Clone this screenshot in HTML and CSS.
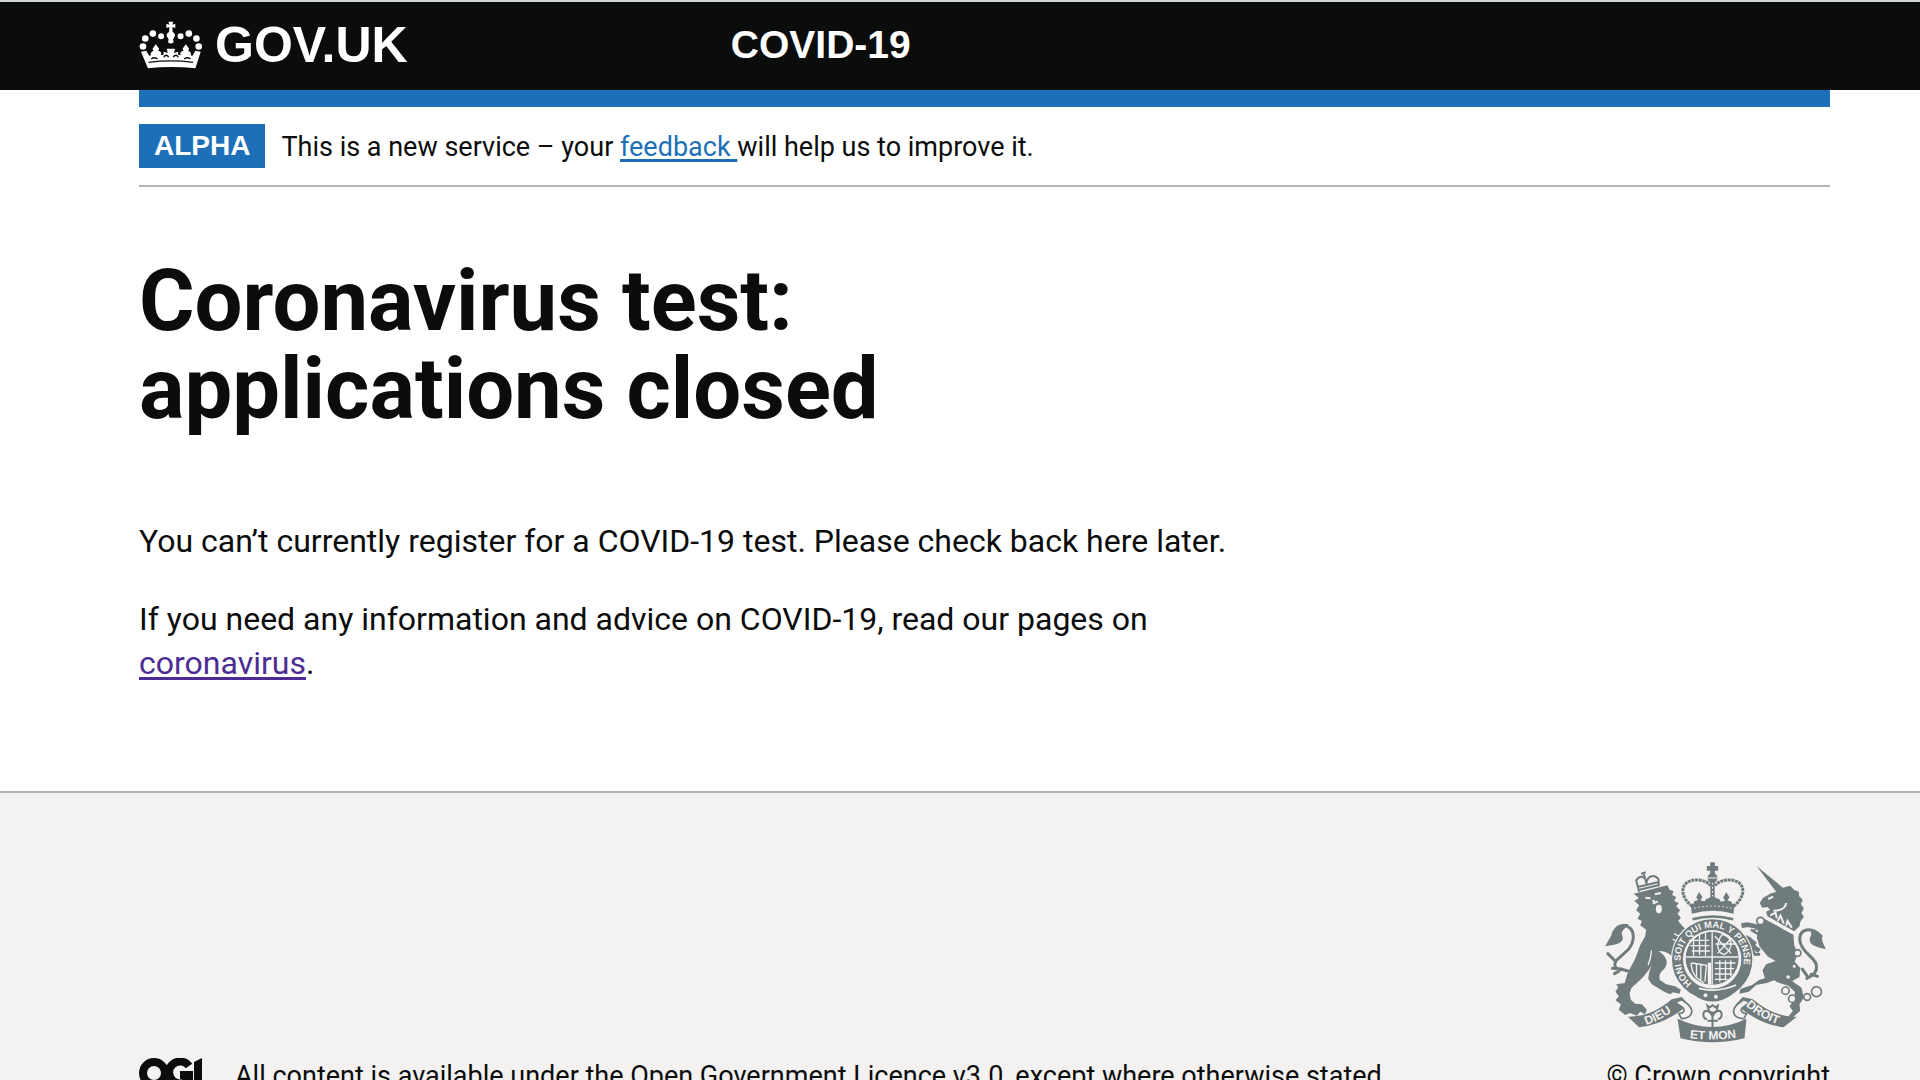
FILE: index.html
```html
<!DOCTYPE html>
<html lang="en">
<head>
    <meta charset="UTF-8">
    <meta name="viewport" content="width=device-width, initial-scale=1.0">
    <title>Coronavirus test: applications closed - GOV.UK</title>
    <link rel="stylesheet" href="styles.css">
</head>
<body>
    <header class="header">
        <div class="container header-content">
            <div class="header-logo">
                <a href="#" class="logo">
                    <svg class="logo-crown" viewBox="55 58 194 148" aria-hidden="true">
                        <g fill="currentColor">
                            <circle cx="67" cy="135" r="10"/>
                            <circle cx="74" cy="111" r="10"/>
                            <circle cx="97" cy="96" r="10"/>
                            <circle cx="122" cy="104" r="9"/>
                            <circle cx="181" cy="104" r="9"/>
                            <circle cx="206" cy="96" r="10"/>
                            <circle cx="229" cy="111" r="10"/>
                            <circle cx="236" cy="135" r="10"/>
                            <path d="M144 60h15l-3 9 9-3v13l-9-3 1 15c7 3 9 10 5 16l-4 7 2 8c-5 5-12 5-17 0l2-8-4-7c-4-6-2-13 5-16l1-15-9 3V66l9 3z"/>
                            <path d="M61 151l16-3 9 15 5-1c-2-8 1-11 8-13l-3-7 10-14 10 14-3 7c8 0 12 6 8 12l9-1-1-9 13 4-3-13h25l-3 13 13-4-1 9 9 1c-4-6 0-12 8-12l-3-7 10-14 10 14-3 7c7 2 10 5 8 13l5 1 9-15 16 3-16 50c-50-5-96-5-144 0z"/>
                        </g>
                        <g fill="none" stroke="#0b0c0c" stroke-width="4">
                            <path d="M84 183c46-6 90-6 135 0M92 173c6-5 13-5 19 0M130 168c3-8 10-9 15-1M159 167c5-8 12-7 15 1M192 173c6-5 13-5 19 0"/>
                        </g>
                    </svg>
                    <span>GOV.UK</span>
                </a>
            </div>
            <a href="#" class="service-name">COVID-19</a>
        </div>
    </header>

    <div class="container">
        <div class="header-bar"></div>
        <div class="phase-banner">
            <strong class="tag">ALPHA</strong>
            <span>This is a new service – your <a href="#" class="link">feedback </a>will help us to improve it.</span>
        </div>

        <main class="main">
            <h1>Coronavirus test: applications closed</h1>
            <p>You can’t currently register for a COVID-19 test. Please check back here later.</p>
            <p>If you need any information and advice on COVID-19, read our pages on <a href="#" class="link link-visited">coronavirus</a>.</p>
        </main>
    </div>

    <footer class="footer">
        <div class="container footer-content">
            <div class="licence">
                <svg class="licence-logo" viewBox="0 0 64 30" aria-hidden="true">
                    <g fill="none" stroke="currentColor" stroke-width="8">
                        <circle cx="15" cy="15" r="11"/>
                        <path d="M50 8A11 11 0 1 0 50 21V17H41"/>
                    </g>
                    <path d="M55 4l8-4v22h9v8H55z" fill="currentColor"/>
                </svg>
                <span>All content is available under the <a href="#" class="licence-link">Open Government Licence v3.0</a>, except where otherwise stated</span>
            </div>
            <a href="#" class="copyright">
                <svg class="crest" viewBox="42 32 668 546" aria-hidden="true">
                    <defs>
                        <path id="garter" d="M305 400A95 95 0 1 1 427 400"/>
                        <path id="ribbonLeft" d="M168 524Q218 508 264 470"/>
                        <path id="ribbonMid" d="M286 562Q366 574 452 560"/>
                        <path id="ribbonRight" d="M466 466Q518 512 580 526"/>
                    </defs>

                    <!-- lion -->
                    <path fill="currentColor" d="M148 126L232 105 238 118 250 122 246 134 258 140 252 152 266 158 258 168 270 180 262 190 272 202 264 212 276 226 290 240 262 272 258 330 262 345C255 325 240 302 205 302C228 318 238 336 222 356Q205 368 208 388L228 402 255 408 272 418 268 430 248 426 240 432 222 424 205 414 185 402 174 385 178 362 185 345Q165 378 140 398L124 412 118 430 122 448 135 460 155 462 170 478 165 492 150 484 140 496 120 488 105 494 86 478 92 462 76 450 86 438 76 424 84 410 78 402 104 398C112 360 130 340 138 318L150 285 165 258 168 238 150 225 155 212 142 205 150 190 138 180 147 165 133 152 146 143 131 130z"/>
                    <g fill="none" stroke="currentColor" stroke-width="9" stroke-linecap="round">
                        <path d="M113 362l-18-5c-20 0-28-12-14-29l34-31c18-22 19-51 4-64-12-11-30-10-42 4"/>
                        <path d="M96 357l-29-3M87 362l-14 8M75 332l-22-22"/>
                    </g>
                    <path fill="currentColor" d="M115 222c-26-5-48 12-52 34l-18 32c26-4 49-7 53-22 2-13-10-14 2-28z"/>
                    <path fill="none" stroke="currentColor" stroke-width="6" d="M147 124l-9-34c11-17 29-12 31 6 4-20 23-26 36-10l1 22M143 110l60-14M148 118l56-13M170 104l-10-36M153 70l14-4"/>
                    <path fill="none" stroke="#f3f2f1" stroke-width="6" d="M166 142l15 2M194 132l18-4M188 160l15-7"/>
                    <ellipse cx="206" cy="176" rx="9" ry="13" fill="#f3f2f1"/>
                    <circle cx="190" cy="152" r="4" fill="#f3f2f1"/>
                    <path fill="none" stroke="#f3f2f1" stroke-width="4" d="M252 250l24 13M247 266l23 13M184 300q-2 26-10 44"/>

                    <!-- unicorn -->
                    <path fill="currentColor" d="M499 47L578 112 600 106 612 119 626 124 627 138 638 148 632 161 641 174 634 188 641 200 631 213 628 228 612 243 532 198 528 184 540 178 532 170 516 172 509 158 518 143 540 130 558 124z"/>
                    <path fill="currentColor" d="M522 205L610 253 612 285 622 308 614 335 630 352 628 380 606 392 634 412 641 442 628 462 630 482 604 504 596 496 608 482 598 468 612 450 614 424 594 406 562 396 552 390 530 398 498 404 476 424 448 430 450 416 486 404 508 388 524 384 517 360 528 342 556 332 532 318 508 288 500 262 506 228z"/>
                    <path fill="none" stroke="currentColor" stroke-width="14" stroke-linejoin="round" d="M516 232l-42-9-20 3M508 302l-14-9-18-29M496 282l-30-22"/>
                    <path fill="none" stroke="currentColor" stroke-width="8" d="M482 238l28 16M474 276l20 36 16 0"/>
                    <path fill="none" stroke="#f3f2f1" stroke-width="6" d="M522 198l84 50M540 195l16-8 4 17M563 212l8-16 10 24M588 226l4-14 13 20M550 181c19 0 36-6 38-23M534 146l15-7"/>
                    <g fill="none" stroke="currentColor" stroke-width="9" stroke-linecap="round">
                        <path d="M650 384c18-8 32-20 29-38-2-18-26-31-39-50-17-23-15-52 9-57 18-3 34 8 44 19M663 372l19 6M636 356l16 22"/>
                    </g>
                    <path fill="currentColor" d="M661 238c22 2 35 18 36 36l10 23c-25-8-45-10-48-26-2-13 9-14 2-33z"/>
                    <g fill="#f3f2f1" stroke="currentColor" stroke-width="5">
                        <circle cx="511" cy="212" r="11"/>
                        <circle cx="500" cy="242" r="6"/>
                        <circle cx="622" cy="308" r="10"/>
                        <circle cx="612" cy="348" r="7"/>
                        <circle cx="594" cy="380" r="8"/>
                        <circle cx="586" cy="421" r="11"/>
                        <circle cx="606" cy="445" r="11"/>
                        <circle cx="651" cy="440" r="10"/>
                        <circle cx="679" cy="424" r="15"/>
                    </g>

                    <!-- shield inside the garter -->
                    <circle cx="366" cy="327" r="124" fill="#f3f2f1"/>
                    <circle cx="366" cy="327" r="104" fill="none" stroke="currentColor" stroke-width="33"/>
                    <circle cx="366" cy="324" r="80" fill="currentColor"/>
                    <g fill="none" stroke="#f3f2f1" stroke-width="4">
                        <path d="M288 320h156M366 246v158M300 286h58M305 302h54M296 270h60M310 258v58M328 252v62M346 248v68"/>
                        <path d="M374 258l49 51M424 263l-42 46M396 252c32 8 36 42 6 61-19-6-28-30-6-61M376 281h60"/>
                        <path d="M303 338c1 32 15 49 38 58M305 338l44 7-5 48M319 342v37M332 343v47"/>
                        <path d="M374 338h62M374 355h58M374 371h52M374 387h38M389 330v64M406 330v60M422 330v48"/>
                        <circle cx="366" cy="324" r="82"/>
                    </g>
                    <path stroke="#f3f2f1" stroke-width="10" d="M358 337v66"/>
                    <path fill="currentColor" d="M328 412q52 12 104-8l-8 30q-52 36-104 6z"/>
                    <path fill="none" stroke="#f3f2f1" stroke-width="5" d="M326 414q56 14 112-10"/>
                    <circle cx="346" cy="435" r="6" fill="#f3f2f1"/>
                    <circle cx="377" cy="439" r="6" fill="#f3f2f1"/>
                    <text class="crest-text"><textPath href="#garter">HONI SOIT QUI MAL Y PENSE</textPath></text>

                    <!-- crown -->
                    <path fill="currentColor" d="M302 161q65-18 131 0l-3 29q-62-17-125 0z"/>
                    <path fill="none" stroke="currentColor" stroke-width="8" d="M307 207q61-17 122 0"/>
                    <g fill="none" stroke="currentColor" stroke-width="9" stroke-dasharray="9 2">
                        <path d="M306 168c-22-17-35-42-24-62 13-23 62-23 79 0"/>
                        <path d="M430 168c22-17 35-42 24-62-13-23-62-23-79 0"/>
                    </g>
                    <path fill="none" stroke="currentColor" stroke-width="13" d="M367 66v94"/>
                    <path fill="none" stroke="#f3f2f1" stroke-width="3" stroke-dasharray="5 7" d="M367 98v57M312 174q56-14 112 0"/>
                    <circle cx="367" cy="83" r="15" fill="currentColor"/>
                    <path fill="currentColor" d="M360 36h14v11h10v14h-10v10h-14V61h-10V47h10zM327 125l10 16-6 9 15 4-5 12h-31l2-13 12-4-6-8zM408 125l10 16-6 9 12 4 2 13h-31l-4-12 14-4-6-9zM345 148l22-10 23 10v17h-45z"/>
                    <path stroke="#f3f2f1" stroke-width="3" d="M351 83h32"/>

                    <!-- ribbons -->
                    <path fill="currentColor" d="M113 499q69 2 132-52l30-7 20 23-21 16q-58 44-127 52z"/>
                    <path fill="currentColor" d="M620 499q-69 2-132-52l-30-7-22 23 22 16q58 44 122 52z"/>
                    <g fill="#f3f2f1" stroke="currentColor" stroke-width="5">
                        <path d="M274 448c15 11 29 17 31 34 0 14-12 24-31 23l-8-15c15-1 20-10 12-18l-22-16z"/>
                        <path d="M461 448c-15 11-29 17-31 34 0 14 12 24 31 23l8-15c-15-1-20-10-12-18l22-16z"/>
                    </g>
                    <path fill="currentColor" d="M262 505q105 50 207 0l-6 59q-96 24-192 0z"/>
                    <text class="crest-text crest-text-wide"><textPath href="#ribbonLeft">DIEU</textPath></text>
                    <text class="crest-text crest-text-wide"><textPath href="#ribbonMid" startOffset="50%" text-anchor="middle">ET MON</textPath></text>
                    <text class="crest-text crest-text-wide"><textPath href="#ribbonRight">DROIT</textPath></text>
                    <g fill="none" stroke="currentColor" stroke-width="6">
                        <path d="M367 530v-36M352 466l5 17 10 5 12-5 4-17-8 5-8-7-7 7zM350 507c-14-4-14-26 0-26 8 2 14 9 17 18 3-9 9-16 17-18 14 0 14 22 0 26M352 511h31"/>
                    </g>
                </svg>
                <span>© Crown copyright</span>
            </a>
        </div>
    </footer>
</body>
</html>
```
FILE: styles.css
```css
:root {
    --black: #0b0c0c;
    --blue: #1d70b8;
    --visited: #4c2c92;
    --border: #b1b4b6;
    --footer-bg: #f3f2f1;
    --crest: #6f7b7d;
    --font-bold: "Liberation Sans", Arial, sans-serif;
}

* {
    box-sizing: border-box;
    margin: 0;
    padding: 0;
}

body {
    font-family: Roboto, "Liberation Sans", sans-serif;
    font-size: 32px;
    line-height: 44px;
    color: var(--black);
    background-color: white;
}

.container {
    padding: 0 90px 0 139px;
}

.header {
    background-color: var(--black);
    border-top: 2px solid #d0d4d4;
    font-family: var(--font-bold);
    font-weight: bold;
}

.header-content {
    display: flex;
    align-items: center;
    height: 88px;
    padding-bottom: 2px;
}

.header-logo {
    display: flex;
    width: 35%;
}

.logo {
    display: flex;
    align-items: center;
    gap: 12px;
    color: white;
    font-size: 50px;
    text-decoration: none;
}

.logo-crown {
    width: 64px;
    height: 49px;
}

.service-name {
    color: white;
    font-size: 39px;
    text-decoration: none;
}

.header-bar {
    height: 17px;
    background-color: var(--blue);
}

.phase-banner {
    display: flex;
    align-items: center;
    gap: 16px;
    padding: 17px 0;
    border-bottom: 2px solid var(--border);
    font-size: 27px;
}

.phase-banner span {
    padding-top: 2px;
    line-height: 42px;
}

.tag {
    padding: 0 15px;
    background-color: var(--blue);
    color: white;
    font-family: var(--font-bold);
    font-size: 28px;
}

.link {
    color: var(--blue);
    text-decoration: underline;
    text-decoration-thickness: 3px;
    text-underline-offset: 3px;
}

.link-visited {
    color: var(--visited);
}

.main {
    max-width: 1120px;
    padding: 70px 0 106px;
}

h1 {
    max-width: 840px;
    margin-bottom: 86px;
    font-size: 85px;
    line-height: 88px;
}

p {
    margin-bottom: 34px;
}

p:last-child {
    margin-bottom: 0;
}

.footer {
    background-color: var(--footer-bg);
    border-top: 2px solid var(--border);
}

.footer-content {
    display: flex;
    justify-content: space-between;
    align-items: flex-end;
    padding-top: 68px;
    padding-bottom: 60px;
    font-size: 27px;
}

.licence {
    display: flex;
    align-items: flex-start;
    gap: 32px;
}

.licence-logo {
    width: 64px;
    height: 30px;
    margin-top: 4px;
}

.licence-link,
.copyright {
    color: var(--black);
}

.copyright {
    display: flex;
    flex-direction: column;
    align-items: flex-end;
    gap: 11px;
    text-decoration: none;
}

.crest {
    width: 223px;
    height: 182px;
    margin-right: 3px;
    color: var(--crest);
}

.crest-text {
    fill: var(--footer-bg);
    font-family: var(--font-bold);
    font-size: 28px;
    font-weight: bold;
}

.crest-text-wide {
    font-size: 36px;
}
```
